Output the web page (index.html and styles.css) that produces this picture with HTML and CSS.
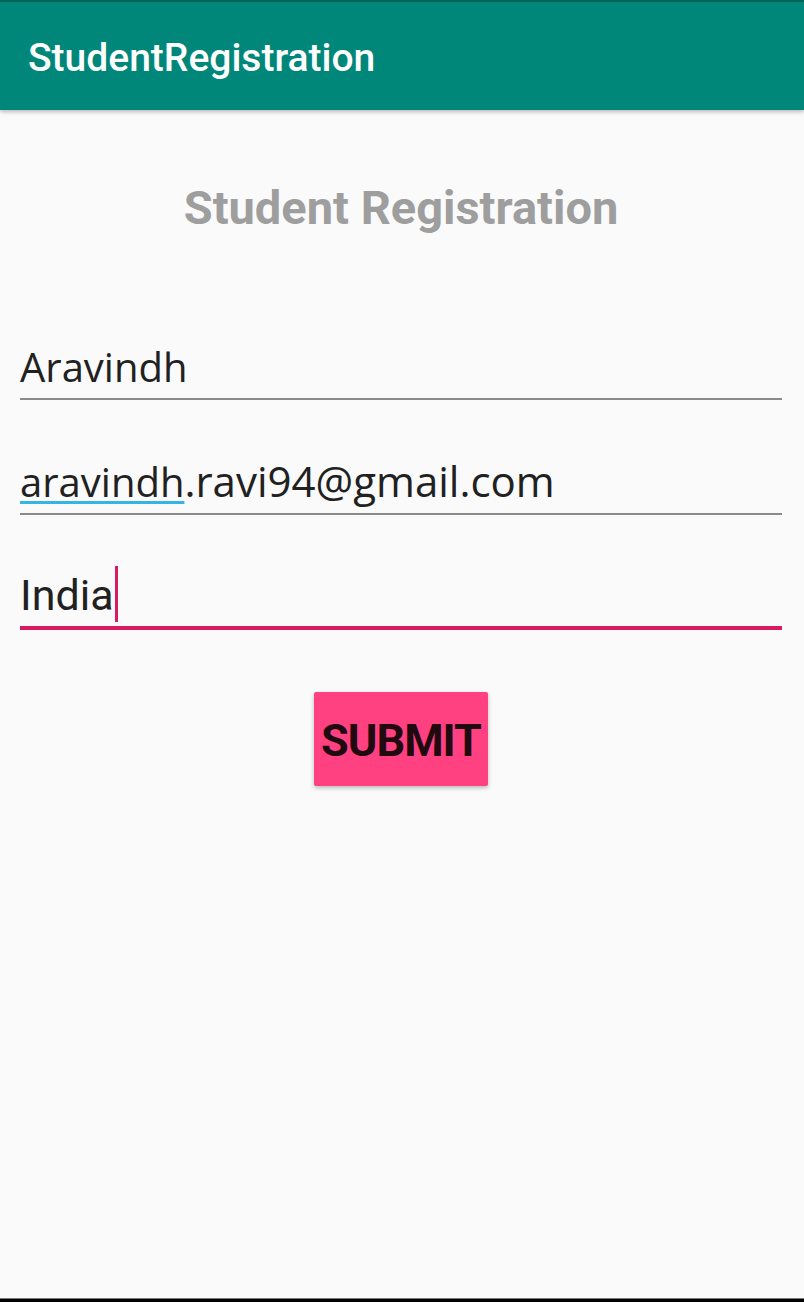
FILE: index.html
```html
<!DOCTYPE html>
<html>
<head>
<meta charset="utf-8">
<link rel="stylesheet" href="styles.css">
</head>
<body>
<div class="screen">
  <header class="appbar">
    <div class="appbar-title">StudentRegistration</div>
  </header>
  <main class="content">
    <h1 class="heading">Student Registration</h1>
    <div class="field">
      <span class="value name">Aravindh</span>
    </div>
    <div class="field">
      <span class="value email"><span class="spell">aravindh</span>.ravi94@gmail.com</span>
    </div>
    <div class="field focused">
      <span class="value country">India</span><span class="cursor"></span>
    </div>
    <div class="actions">
      <button class="submit">SUBMIT</button>
    </div>
  </main>
  <div class="navbar"></div>
</div>
</body>
</html>
```
FILE: styles.css
```css
html, body {
  margin: 0;
  padding: 0;
}
body {
  background: #fafafa;
  font-family: Roboto, "Liberation Sans", sans-serif;
}
.screen {
  height: 1302px;
  display: flex;
  flex-direction: column;
  overflow: hidden;
}
.appbar {
  height: 110px;
  background: #00877a;
  border-top: 2px solid #00665c;
  box-sizing: border-box;
  display: flex;
  align-items: center;
  padding-left: 28px;
  box-shadow: 0 2px 4px rgba(0,0,0,0.25);
  position: relative;
  z-index: 1;
}
.appbar-title {
  color: #fff;
  font-size: 39px;
  font-weight: 500;
  padding-top: 4px;
}
.content {
  flex: 1;
  padding: 0 22px 0 20px;
  display: flex;
  flex-direction: column;
}
.heading {
  margin: 0;
  margin-top: 72px;
  text-align: center;
  color: #9e9e9e;
  font-size: 47px;
  font-weight: 700;
  line-height: 52px;
}
.field {
  position: relative;
  border-bottom: 2px solid #8a8a8a;
  height: 60px;
  display: flex;
  align-items: flex-end;
  padding-bottom: 4px;
  box-sizing: border-box;
}
.heading + .field { margin-top: 106px; }
.field + .field { margin-top: 55px; }
.value {
  font-family: "Open Sans", sans-serif;
  font-size: 40px;
  color: #212121;
  line-height: 54px;
}
.email {
  font-size: 42px;
}
.spell {
  font-size: 40px;
  text-decoration: underline;
  text-decoration-color: #33b5e5;
  text-decoration-thickness: 3px;
  text-underline-offset: 4px;
}
.country {
  font-family: Roboto, sans-serif;
  font-size: 43px;
}
.focused {
  border-bottom: 4px solid #d81b60;
}
.cursor {
  width: 3px;
  height: 56px;
  background: #d81b60;
  margin-left: 1px;
  align-self: flex-end;
  margin-bottom: 0;
}
.actions {
  display: flex;
  justify-content: center;
  margin-top: 62px;
}
.submit {
  width: 174px;
  height: 94px;
  background: #ff4081;
  border: none;
  border-radius: 2px;
  box-shadow: 0 2px 4px rgba(0,0,0,0.25);
  font-family: Roboto, sans-serif;
  font-weight: 700;
  font-size: 45px;
  color: #200a10;
  padding: 2px 0 0;
  letter-spacing: -1px;
}
.navbar {
  height: 4px;
  background: #000;
  border-top: 1px solid #777;
  box-sizing: border-box;
}
```
